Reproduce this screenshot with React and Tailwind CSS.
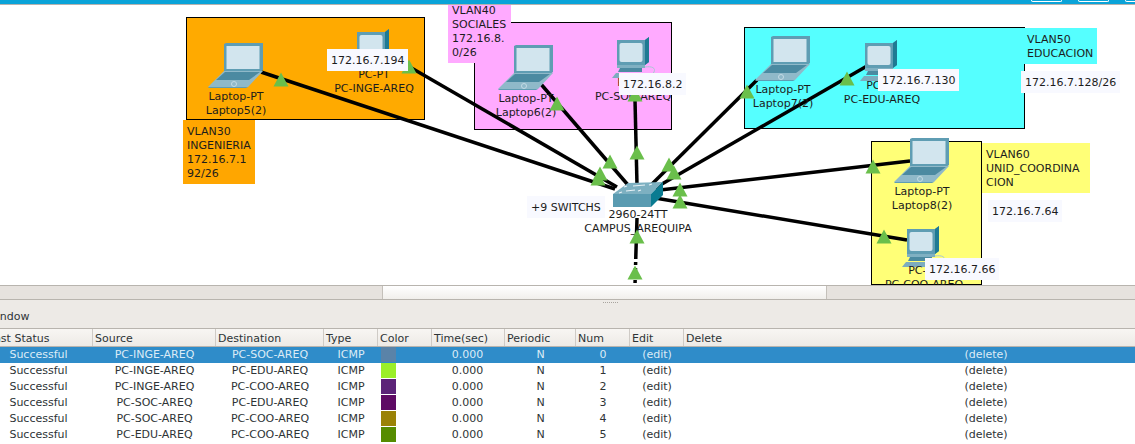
const font = { fontFamily: '"DejaVu Sans", sans-serif' };

const Laptop = ({ className }) => (
    <svg className={className} width="56" height="46" viewBox="0 0 56 46">
        <polygon points="16,1 18,0 55,0 55,27 52,29 16,29" fill="#5f9db3" />
        <rect x="18.5" y="3" width="33" height="23" fill="#d2e5ee" />
        <polygon points="16,28 55,28 40,44 0,44 2,42" fill="#8fb9c9" />
        <polygon points="17,29 52,29 41,37 8,37" fill="#4b8aa1" />
        <polygon points="0,44 40,44 38,45 1,45" fill="#5f9db3" />
        <circle cx="26" cy="41" r="2.5" fill="none" stroke="#c3dbe5" strokeWidth="1" />
    </svg>
);

const Pc = ({ className }) => (
    <svg className={className} width="46" height="42" viewBox="0 0 46 42">
        <polygon points="5,3 33,3 37,0 37,25 33,28 5,28" fill="#5f9db3" />
        <polygon points="33,3 37,0 37,25 33,28" fill="#1f7a93" />
        <rect x="7.5" y="6" width="23" height="19" rx="2" fill="#d2e5ee" />
        <polygon points="5,28 33,28 33,31 5,31" fill="#7fb0c2" />
        <polygon points="8,31 30,31 30,35 6,35" fill="#4b8aa1" />
        <polygon points="4,36 36,36 33,41 0,41" fill="#7dacbe" />
        <path d="M33 30 C 40 29, 44 31, 42 35 L 38 41" fill="none" stroke="#a9c7d3" strokeWidth="1" />
    </svg>
);

const Switch = ({ className }) => (
    <svg className={className} width="52" height="26" viewBox="0 0 52 26">
        <polygon points="1,12 16,1 51,0 39,12" fill="#7db0c1" />
        <rect x="1" y="12" width="38" height="13" fill="#5a9bb1" />
        <polygon points="39,12 51,0 51,13 39,25" fill="#0a7b91" />
        <path d="M12 5 L15 4 M26 9 L29 8 M7 11 L10 10 M37 3 L40 2 M21 4 L33 3 M14 9 L23 8" stroke="#e8f2f6" strokeWidth="1.2" />
    </svg>
);

const Links = () => (
    <svg className="absolute left-0 top-0" width="1135" height="280" viewBox="0 5 1135 280">
        <g stroke="#000" strokeWidth="3.5" fill="none">
            <line x1="261" y1="72" x2="615" y2="189" />
            <line x1="408" y1="66" x2="617" y2="187" />
            <line x1="540" y1="83" x2="628" y2="185" />
            <line x1="635" y1="100" x2="637" y2="185" />
            <line x1="757" y1="80" x2="650" y2="186" />
            <line x1="867" y1="66" x2="655" y2="188" />
            <line x1="910" y1="161" x2="660" y2="190" />
            <line x1="907" y1="240" x2="655" y2="198" />
            <line x1="637" y1="218" x2="636" y2="250" />
            <line x1="636" y1="250" x2="635" y2="285" strokeDasharray="9 3 3 3" />
        </g>
    </svg>
);

const Arrows = () => {
    const tips = [
        [281, 73], [409, 60], [557, 97], [635, 88], [637, 146], [610, 155], [600, 167], [598, 172],
        [669, 158], [674, 166], [680, 183], [680, 195], [637, 230], [635, 266], [747, 85], [847, 72],
        [873, 160], [884, 230],
    ];
    return (
        <svg className="absolute left-0 top-0" width="1135" height="280" viewBox="0 5 1135 280">
            {tips.map(([x, y]) => (
                <polygon key={`${x}-${y}`} points={`${x},${y - 0.5} ${x + 7.5},${y + 13.5} ${x - 7.5},${y + 13.5}`} fill="#6abf4b" />
            ))}
        </svg>
    );
};

const rows = [
    ["PC-INGE-AREQ", "PC-SOC-AREQ", "bg-[#5a83a8]", "0"],
    ["PC-INGE-AREQ", "PC-EDU-AREQ", "bg-[#9bef2a]", "1"],
    ["PC-INGE-AREQ", "PC-COO-AREQ", "bg-[#5c2378]", "2"],
    ["PC-SOC-AREQ", "PC-EDU-AREQ", "bg-[#5e0a64]", "3"],
    ["PC-SOC-AREQ", "PC-COO-AREQ", "bg-[#9a8206]", "4"],
    ["PC-EDU-AREQ", "PC-COO-AREQ", "bg-[#568c00]", "5"],
];

const headers = ["Last Status", "Source", "Destination", "Type", "Color", "Time(sec)", "Periodic", "Num", "Edit", "Delete"];

const columns = "grid grid-cols-[107px_123px_108px_54px_54px_73px_71px_54px_54px_604px]";

const App = () => {
    return (
        <div style={font} className="flex h-[444px] w-[1135px] flex-col overflow-hidden bg-white text-[11px] leading-[14px] text-[#2e3436]">
            {/* Title bar edge */}
            <div className="flex h-[5px] shrink-0 justify-end gap-[16px] overflow-hidden border-b border-[#b5b2ae] bg-[#0aa3d8]">
                <div className="h-[2px] w-[31px] rounded-b border-b border-x border-white" />
                <div className="h-[2px] w-[31px] rounded-b border-b border-x border-white" />
                <div className="-mr-[21px] h-[2px] w-[31px] shrink-0 rounded-b border-b border-x border-white" />
            </div>

            {/* Workspace */}
            <div className="relative h-[280px] shrink-0 overflow-hidden bg-white text-[#1c1c1c]">
                <div className="absolute left-[186px] top-[12px] h-[103px] w-[239px] border border-black bg-[#ffaa00]" />
                <div className="absolute left-[474px] top-[17px] h-[108px] w-[198px] border border-black bg-[#ffaaff]" />
                <div className="absolute left-[744px] top-[22px] h-[102px] w-[281px] border border-black bg-[#55ffff]" />
                <div className="absolute left-[871px] top-[136px] h-[144px] w-[111px] border border-black bg-[#ffff77]" />

                <Links />

                <Laptop className="absolute left-[208px] top-[38px]" />
                <Laptop className="absolute left-[498px] top-[40px]" />
                <Laptop className="absolute left-[755px] top-[31px]" />
                <Laptop className="absolute left-[894px] top-[133px]" />
                <Pc className="absolute left-[352px] top-[24px]" />
                <Pc className="absolute left-[612px] top-[32px]" />
                <Pc className="absolute left-[860px] top-[35px]" />
                <Pc className="absolute left-[902px] top-[221px]" />
                <Switch className="absolute left-[612px] top-[177px]" />

                <div className="absolute left-[236px] top-[85px] -translate-x-1/2 whitespace-nowrap text-center">Laptop-PT<br />Laptop5(2)</div>
                <div className="absolute left-[526px] top-[87px] -translate-x-1/2 whitespace-nowrap text-center">Laptop-PT<br />Laptop6(2)</div>
                <div className="absolute left-[783px] top-[78px] -translate-x-1/2 whitespace-nowrap text-center">Laptop-PT<br />Laptop7(2)</div>
                <div className="absolute left-[922px] top-[180px] -translate-x-1/2 whitespace-nowrap text-center">Laptop-PT<br />Laptop8(2)</div>
                <div className="absolute left-[374px] top-[63px] -translate-x-1/2 whitespace-nowrap text-center">PC-PT<br />PC-INGE-AREQ</div>
                <div className="absolute left-[633px] top-[71px] -translate-x-1/2 whitespace-nowrap text-center">PC-PT<br />PC-SOC-AREQ</div>
                <div className="absolute left-[882px] top-[74px] -translate-x-1/2 whitespace-nowrap text-center">PC-PT<br />PC-EDU-AREQ</div>
                <div className="absolute left-[924px] top-[259px] -translate-x-1/2 whitespace-nowrap text-center">PC-PT<br />PC-COO-AREQ</div>
                <div className="absolute left-[638px] top-[203px] -translate-x-1/2 whitespace-nowrap text-center">2960-24TT<br />CAMPUS_AREQUIPA</div>

                <Arrows />

                {/* Notes */}
                <div className="absolute left-[183px] top-[115px] w-[72px] bg-[#ffa600] px-[4px] pb-[3px] pt-[5px] break-all">VLAN30<br />INGENIERIA<br />172.16.7.1<br />92/26</div>
                <div className="absolute left-[448px] top-[-6px] w-[63px] bg-[#ffaaff] px-[4px] pb-[3px] pt-[5px]">VLAN40<br />SOCIALES<br />172.16.8.<br />0/26</div>
                <div className="absolute left-[1024px] top-[23px] w-[73px] bg-[#55ffff] px-[3px] pb-[3px] pt-[5px]">VLAN50<br />EDUCACION</div>
                <div className="absolute left-[982px] top-[138px] w-[108px] bg-[#ffff77] px-[4px] pb-[3px] pt-[5px]">VLAN60<br />UNID_COORDINA<br />CION</div>
                <div className="absolute left-[327px] top-[44px] bg-[#f8f9ff] px-[4px] pb-[3px] pt-[5px]">172.16.7.194</div>
                <div className="absolute left-[619px] top-[68px] bg-[#f8f9ff] px-[4px] pb-[3px] pt-[5px]">172.16.8.2</div>
                <div className="absolute left-[878px] top-[64px] bg-[#f8f9ff] px-[4px] pb-[3px] pt-[5px]">172.16.7.130</div>
                <div className="absolute left-[1021px] top-[66px] bg-[#f8f9ff] px-[4px] pb-[3px] pt-[5px]">172.16.7.128/26</div>
                <div className="absolute left-[988px] top-[195px] bg-[#f8f9ff] px-[4px] pb-[3px] pt-[5px]">172.16.7.64</div>
                <div className="absolute left-[925px] top-[253px] bg-[#f8f9ff] px-[4px] pb-[3px] pt-[5px]">172.16.7.66</div>
                <div className="absolute left-[527px] top-[191px] bg-[#f8f9ff] px-[4px] pb-[3px] pt-[5px]">+9 SWITCHS</div>
            </div>

            {/* Horizontal scrollbar */}
            <div className="flex h-[15px] shrink-0 border-y border-[#b8b4ae] bg-[#e6e2de]">
                <div className="ml-[382px] w-[445px] border-x border-[#c4c0ba] bg-gradient-to-b from-white to-[#f1efec]" />
            </div>

            {/* Window toolbar */}
            <div className="relative flex h-[28px] shrink-0 items-center bg-[#edeae6]">
                <span className="-ml-[14px] pt-[6px]">Window</span>
                <div className="absolute left-[603px] top-[2px] h-px w-[15px] border-t border-dotted border-[#a8a49e]" />
            </div>

            {/* PDU table */}
            <div className="-ml-[14px] w-[1303px]">
                <div className={`${columns} h-[19px] border-y border-[#b8b4ae] bg-gradient-to-b from-[#f8f6f3] to-[#edeae6]`}>
                    {headers.map((h) => (
                        <div key={h} className="border-r border-[#cfcbc6] pl-[2px] pt-[3px] leading-[14px]">{h}</div>
                    ))}
                </div>
                {rows.map(([source, destination, color, num], i) => (
                    <div
                        key={num}
                        className={`${columns} h-[16px] text-center leading-[15px] ${i === 0 ? "bg-[#2f8cc9] text-[#dcebf6]" : "bg-white"}`}
                    >
                        <div className="pr-[2px]">Successful</div>
                        <div>{source}</div>
                        <div>{destination}</div>
                        <div>ICMP</div>
                        <div className="pl-[3px]">
                            <div className={`h-[15px] w-[15px] ${color}`} />
                        </div>
                        <div className="pr-[2px]">0.000</div>
                        <div>N</div>
                        <div>{num}</div>
                        <div>(edit)</div>
                        <div>(delete)</div>
                    </div>
                ))}
            </div>
        </div>
    );
};

export default App;
